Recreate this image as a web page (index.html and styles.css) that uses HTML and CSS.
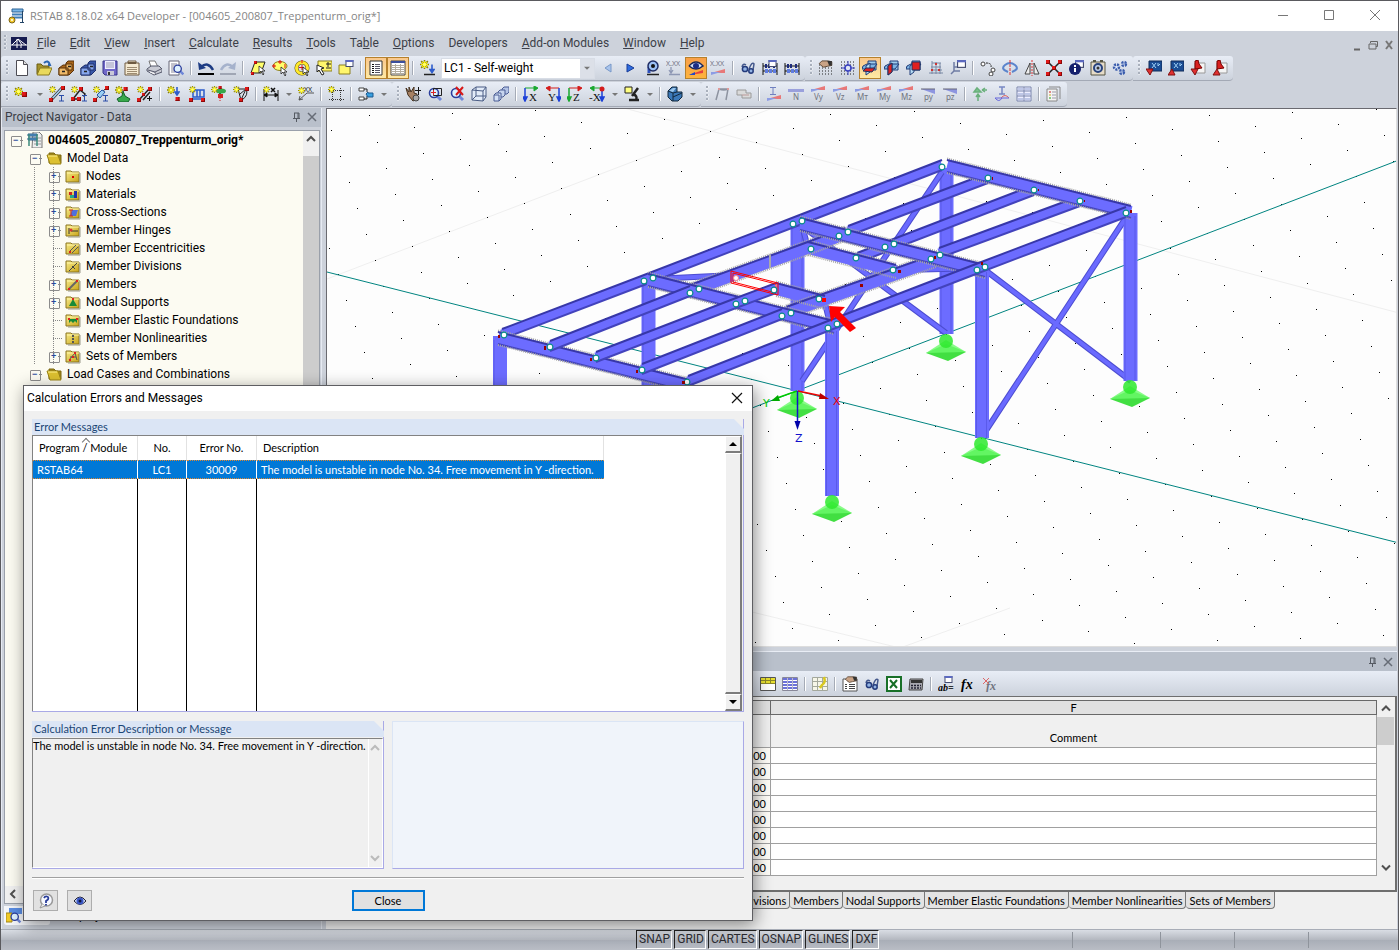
FILE: index.html
```html
<!DOCTYPE html>
<html lang="en">
<head>
<meta charset="utf-8">
<title>RSTAB 8.18.02 x64 Developer</title>
<link rel="stylesheet" href="styles.css">
</head>
<body>
<svg class="defs" aria-hidden="true">
  <defs>
    <linearGradient id="gold" x2="1" y2="1"><stop offset="0" stop-color="#f8ec8c"/><stop offset="1" stop-color="#c8a418"/></linearGradient>
    <symbol id="star" viewBox="0 0 8 8"><path d="M4 0v8M0 4h8M1 1l6 6M7 1L1 7" stroke="#8c8400" stroke-width="1.4"/><path d="M4 1v6M1 4h6M2 2l4 4M6 2L2 6" stroke="#fff200"/><circle cx="4" cy="4" r="1.5" fill="#ffff70"/></symbol>
    <symbol id="red" viewBox="0 0 4 4"><rect width="4" height="4" fill="#e01818"/><path d="M0 3.5h4M3.5 0v4" stroke="#8c0808"/></symbol>
    <symbol id="folder" viewBox="0 0 16 16"><path d="M1 3h5l1 1h7v10H1z" fill="url(#gold)" stroke="#8a7420"/><path d="M2 5h12" stroke="#fff6a8"/><path d="M15 5v10H3" fill="none" stroke="#9a9a8a"/></symbol>
    <symbol id="openfolder" viewBox="0 0 16 16"><path d="M3 13V3h5l2 2h5v8z" fill="#a18a1c" stroke="#7c6810"/><path d="M1 5h11l3 9H4z" fill="#dcc030" stroke="#9a8316"/><path d="M2 6h9" stroke="#fff08a"/></symbol>
    <symbol id="lens" viewBox="0 0 16 16"><path d="M10 10l4 4" stroke="#7088d8" stroke-width="3"/><circle cx="7" cy="7" r="4.5" fill="#dff2ff" stroke="#2b3d9c" stroke-width="1.6"/></symbol>
    <symbol id="glasses" viewBox="0 0 16 16"><path d="M2 7q1-4 4-2M9 9q3-8 5-5l-1 6" fill="none" stroke="#44588c" stroke-width="1.5"/><circle cx="5" cy="9" r="2.600" fill="#93b4e5" stroke="#233a7b" stroke-width="1.5"/><circle cx="11" cy="11" r="2.2" fill="#93b4e5" stroke="#233a7b" stroke-width="1.5"/></symbol>
    <symbol id="abacus" viewBox="0 0 16 16"><path d="M1 3v12M15 3v12M1 6h14M1 11h14" stroke="#111" fill="none"/><path d="M3 6h2M6 6h2M11 6h2" stroke="#1d2c7c" stroke-width="4"/><path d="M3 11h3M7 11h3M11 11h3" stroke="#5f7ce0" stroke-width="4"/></symbol>
    <symbol id="dots" viewBox="0 0 16 16"><path d="M1 2h14M1 5h14M1 8h14M1 11h14M1 14h14" stroke="#222" stroke-dasharray="1 2"/></symbol>
    <symbol id="hand" viewBox="0 0 16 10"><path d="M1 4l3-3 7 0 4 1v4l-5 1-4 1-3-2z" fill="#c9a386" stroke="#55402e"/><path d="M10 1l5 0v5h-3z" fill="#333"/></symbol>
    <symbol id="cube3" viewBox="0 0 16 16"><path d="M6 1h8v9H6z" fill="#9fccec" stroke="#203c78"/><path d="M1 6l4-2h10l-4 5H0z" fill="#7db4e4" stroke="#203c78"/><path d="M4 6l4-3v9l-4 3z" fill="#b5dcf4" stroke="#203c78"/></symbol>
    <symbol id="win" viewBox="0 0 8 7"><rect x=".5" y=".5" width="7" height="6" fill="#fff" stroke="#444c70"/><path d="M0 1h8" stroke="#5b69c0" stroke-width="2"/></symbol>
    <symbol id="cursor" viewBox="0 0 8 10"><path d="M1 1v7l2-2 2 4 1-1-2-3h3z" fill="#fff" stroke="#222" stroke-width=".8"/></symbol>
    <symbol id="dn" viewBox="0 0 6 9"><path d="M3 0v6M1 5l2 3 2-3z" stroke="#2d5ccc" stroke-width="1.6" fill="#2d5ccc"/></symbol>
    <symbol id="wedge" viewBox="0 0 16 6"><path d="M1 4L15 0v4z" fill="#e87878"/><path d="M1 3h10L1 6z" fill="#8c9ce4"/></symbol>
    <symbol id="wedge2" viewBox="0 0 16 6"><path d="M1 1h14v5z" fill="#8d95e0"/><path d="M1 1h14" stroke="#667"/></symbol>
    <symbol id="support" viewBox="-22 -8 44 30"><path d="M-20 12L0 3L20 11L2 20z" fill="#42df42"/><path d="M-20 12L0 -1L20 11z" fill="#6bfa6b" opacity=".8"/><circle r="7" fill="#2de92d" opacity=".85"/></symbol>
    <symbol id="nd" viewBox="-4 -4 8 8"><circle r="2.9" fill="#fff" stroke="#078a8a" stroke-width="1.2"/></symbol>
    <path id="raf-back" d="M502 334L644 280L797 221L942 165M848 231L988 178M857 258L1034 190M939 253L1080 201"/>
    <path id="raf-front" d="M550 346L690 291M596 357L736 303L776 288M642 369L782 314M688 381L828 326L976 269L1126 212"/>
    <path id="deep" d="M690 291L805 249L845 234M786 313L936 260M776 289L825 302M808 248L896 271"/>
    <path id="cross" d="M498 338L690 386M648 280L834 327M800 224L985 271M947 166L1131 212"/>
    <path id="brace" d="M802 381L942 172M802 226L946 333M985 432L1127 216M985 270L1131 381M653 279L735 275M900 270L985 268M801 222L807 244M824 299L831 328"/>
  </defs>
</svg>
<div class="app">
  <header class="titlebar">
    <svg class="ic" viewBox="0 0 16 16"><path d="M4 1h11v3H4z" fill="#79b7e8" stroke="#2d6294"/><path d="M4 6.500h11M4 9.500h11" stroke="#3f7fb8" stroke-width="2"/><path d="M14.500 3v12M12 14.500h4" stroke="#246"/><circle cx="4" cy="12" r="3" fill="#f0c62c" stroke="#7d6414"/><circle cx="4" cy="12" r="1" fill="#fff"/></svg>
    <h1>RSTAB 8.18.02 x64 Developer - [004605_200807_Treppenturm_orig*]</h1>
    <div class="winbtns">
      <button aria-label="Minimize"><svg class="ic" viewBox="0 0 16 16"><path d="M3 7.500h10" stroke="#777"/></svg></button>
      <button aria-label="Maximize"><svg class="ic" viewBox="0 0 16 16"><path d="M3.500 2.500h9v9h-9z" fill="none" stroke="#777"/></svg></button>
      <button aria-label="Close window"><svg class="ic" viewBox="0 0 16 16"><path d="M3 2l10 10M13 2L3 12" stroke="#777"/></svg></button>
    </div>
  </header>
  <nav class="menubar">
    <span class="grip"></span>
    <svg class="logo" viewBox="0 0 16 13"><path d="M0 0h16v13H0z" fill="#161b50"/><path d="M0 8h16M6 2v9M7 2l8 6M7 2L1 8M7 2l4 6M10 8v3" stroke="#fff"/></svg>
    <button><u>F</u>ile</button><button><u>E</u>dit</button><button><u>V</u>iew</button><button><u>I</u>nsert</button><button><u>C</u>alculate</button><button><u>R</u>esults</button><button><u>T</u>ools</button><button>Ta<u>b</u>le</button><button><u>O</u>ptions</button><button>Developers</button><button><u>A</u>dd-on Modules</button><button><u>W</u>indow</button><button><u>H</u>elp</button>
    <svg class="mdi" viewBox="0 0 44 12"><path d="M3 9.500h6" stroke="#666" stroke-width="2"/><path d="M19.500 3V1.500h7v5H25" fill="none" stroke="#666"/><path d="M18 4h7v5h-7z" fill="none" stroke="#666"/><path d="M35 1l6 8M41 1l-6 8" stroke="#777" stroke-width="2"/></svg>
  </nav>

  <div class="toolbar">
    <div class="group">
      <span class="grip"></span>
      <button aria-label="New"><svg class="ic" viewBox="0 0 16 16"><path d="M2.500.5h7l4 4v11h-11z" fill="#fff" stroke="#4c4c54"/><path d="M9.500.5v4h4" fill="#ddd" stroke="#4c4c54"/></svg></button>
      <button aria-label="Open"><svg class="ic" viewBox="0 0 16 16"><path d="M1 14V4h4l2 2h6v8z" fill="#a4922c" stroke="#6b5c10"/><path d="M4 8h12l-3 7H1z" fill="#e9d95c" stroke="#8a7a1e"/><path d="M8 3q4-4 6 2l-2 0" fill="none" stroke="#2c66b0" stroke-width="2"/></svg></button>
      <button aria-label="Project manager"><svg class="ic" viewBox="0 0 16 16"><path d="M1 8l4-3h3V3l2-2h6v9l-5 5H1z" fill="#a8661c" stroke="#5a3208"/><path d="M8 4h6v6H8zM1 8h9v7H1z" fill="#efb968" stroke="#5a3208"/><path d="M4 11.500h3M10 6.500h3" stroke="#222" stroke-width="1.500"/></svg></button>
      <button aria-label="Block manager"><svg class="ic" viewBox="0 0 16 16"><path d="M1 8l4-3h3V3l2-2h6v9l-5 5H1z" fill="#3857a8" stroke="#1d2e6c"/><path d="M8 4h6v6H8zM1 8h9v7H1z" fill="#86a6ec" stroke="#1d2e6c"/><path d="M4 11.500h3M10 6.500h3" stroke="#222" stroke-width="1.500"/></svg></button>
      <button aria-label="Save"><svg class="ic" viewBox="0 0 16 16"><path d="M1 1h14v14H3l-2-2z" fill="#7068c8" stroke="#38348a"/><path d="M3 1h10v8H3z" fill="#eef"/><path d="M4 3h8M4 5h8M4 7h8" stroke="#9a9ab4"/><path d="M5 11h7v4H5z" fill="#c8c8d8"/><path d="M6 12h2v3H6z" fill="#333"/></svg></button>
      <button aria-label="Notes"><svg class="ic" viewBox="0 0 16 16"><path d="M1 3h3V1h8v2h3v12H1z" fill="#f5ead2" stroke="#6e5a40"/><path d="M4 3h8" stroke="#6e5a40" stroke-width="2"/><path d="M3 7.500h10M3 9.500h10M3 11.500h10M3 13.500h10" stroke="#9d8b70"/></svg></button>
      <button aria-label="Print"><svg class="ic" viewBox="0 0 16 16"><path d="M3 1h6l3 6H5z" fill="#fff" stroke="#777"/><path d="M1 9l4-3 8 0 3 3v3l-8 3-7-4z" fill="#c9cbd4" stroke="#55586a"/><path d="M2 10l7 2 6-3M9 12v3" fill="none" stroke="#55586a"/><path d="M4 12l5 2" stroke="#fff"/></svg></button>
      <button aria-label="Print preview"><svg class="ic" viewBox="0 0 16 16"><path d="M1 1h10v14H1z" fill="#fff" stroke="#667"/><path d="M3 4h6M3 6h6M3 8h3M3 10h3M3 12h4" stroke="#889"/><use href="#lens" x="4" y="3" width="13" height="13"/></svg></button>
      <span class="sep"></span>
      <button aria-label="Undo"><svg class="ic" viewBox="0 0 16 16"><path d="M3 7q7-6 12 3" fill="none" stroke="#1d3c84" stroke-width="2.500"/><path d="M0 2l1 8 7-2z" fill="#1d3c84"/><path d="M0 14h16" stroke="#000" stroke-width="2"/></svg></button>
      <button aria-label="Redo"><svg class="ic" viewBox="0 0 16 16"><path d="M13 7Q6 1 1 10" fill="none" stroke="#a5b2cc" stroke-width="2.500"/><path d="M16 2l-1 8-7-2z" fill="#a5b2cc"/><path d="M0 14h16" stroke="#a0a6b4" stroke-width="2"/></svg></button>
      <span class="sep"></span>
      <button aria-label="Select parallelogram"><svg class="ic" viewBox="0 0 16 16"><path d="M5 2h10l-4 11H1z" fill="#ffff6c" stroke="#222"/><use href="#red" x="4" y="1" width="3" height="3"/><use href="#red" x="1" y="12" width="3" height="3"/><use href="#cursor" x="8" y="5" width="8" height="10"/></svg></button>
      <button aria-label="Select ellipse"><svg class="ic" viewBox="0 0 16 16"><ellipse cx="8" cy="6" rx="7" ry="4.500" fill="#ffff6c" stroke="#8c8020"/><path d="M8 0v4M6 2h4M0 6h4M2 4v4M13 4v4" stroke="#e01010"/><use href="#cursor" x="8" y="6" width="8" height="10"/></svg></button>
      <button aria-label="Select ring"><svg class="ic" viewBox="0 0 16 16"><circle cx="8" cy="8" r="5.500" fill="none" stroke="#5a5210" stroke-width="4"/><circle cx="8" cy="8" r="5.500" fill="none" stroke="#ffe92c" stroke-width="3"/><path d="M8 5v5M5 7.500h5M8 0v3" stroke="#e01010"/><use href="#cursor" x="8" y="6" width="8" height="10"/></svg></button>
      <button aria-label="Select plus minus"><svg class="ic" viewBox="0 0 16 16"><path d="M2 1h14v10H2z" fill="#fff66c" stroke="#8c8020"/><path d="M12 2v5M10 4h5M10 8h5" stroke="#222"/><path d="M1 5l7 3-3 1 3 5-2 1-3-5-2 2z" fill="#fff" stroke="#222"/></svg></button>
      <button aria-label="Select special"><svg class="ic" viewBox="0 0 16 16"><path d="M1 5h11v9H1z" fill="#fff66c" stroke="#8c8020"/><use href="#win" x="7" y="0" width="9" height="7"/></svg></button>
      <span class="sep"></span>
      <button class="on" aria-label="Navigator"><svg class="ic" viewBox="0 0 16 16"><path d="M2 1h12v14H2z" fill="#fff" stroke="#333"/><path d="M4 4.500h2M4 6.500h2M4 8.500h2M4 10.500h2M4 12.500h2" stroke="#111"/><path d="M7 4.500h5M7 6.500h5M7 8.500h5M7 10.500h5M7 12.500h5" stroke="#556"/></svg></button>
      <button class="on" aria-label="Tables"><svg class="ic" viewBox="0 0 16 16"><path d="M1 1h14v14H1z" fill="#fff" stroke="#444"/><path d="M1 2h14" stroke="#3b4f9c" stroke-width="2"/><path d="M1 5.500h14M1 7.500h14M1 9.500h14M1 11.500h14M1 13.500h14M5.500 4v11M10.500 4v11" stroke="#b4aea0"/></svg></button>
      <span class="sep"></span>
      <button aria-label="New load case"><svg class="ic" viewBox="0 0 16 16"><use href="#star" x="0" y="0" width="9" height="9"/><use href="#dn" x="9" y="4" width="6" height="10"/><path d="M4 14.500h11" stroke="#222" stroke-width="1.500"/></svg></button>
      <select class="combo" aria-label="Load case"><option>LC1 - Self-weight</option></select>
      <button aria-label="Previous load case"><svg class="ic" viewBox="0 0 16 16"><path d="M11 4L5 8l6 4z" fill="#a8c4ec" stroke="#7898c8"/></svg></button>
      <button aria-label="Next load case"><svg class="ic" viewBox="0 0 16 16"><path d="M5 4l7 4-7 4z" fill="#2d6cdf" stroke="#183c98"/></svg></button>
      <button aria-label="Show loads"><svg class="ic" viewBox="0 0 16 16"><path d="M5 13V7" stroke="#2d50bc" stroke-width="3"/><circle cx="9" cy="6" r="5" fill="#9cc0f4" stroke="#1e2c64" stroke-width="1.500"/><circle cx="9" cy="6" r="2" fill="#111"/><path d="M3 14.500h12" stroke="#222" stroke-width="1.500"/></svg></button>
      <button aria-label="Load values"><svg class="ic" viewBox="0 0 16 16"><text class="g gray" x="0" y="6">X.XX</text><path d="M5 7v6M3 10l2 3 2-3M3 14.500h11" stroke="#8e98b4" stroke-width="1.300" fill="none"/></svg></button>
      <button class="on strong" aria-label="Show results"><svg class="ic" viewBox="0 0 16 16"><path d="M1 6q7-8 14 0-7 6-14 0" fill="#cfe0fa" stroke="#1b2758" stroke-width="1.500"/><circle cx="8" cy="6" r="3" fill="#1b2c84"/><path d="M1 15l14-5v3z" fill="#e24040"/><path d="M1 15l6-3v3z" fill="#2448c4"/></svg></button>
      <button aria-label="Result values"><svg class="ic" viewBox="0 0 16 16"><text class="g gray" x="0" y="6">X.XX</text><use href="#wedge" x="0" y="9" width="16" height="6"/></svg></button>
      <span class="sep"></span>
      <button aria-label="Visibility"><svg class="ic"><use href="#glasses"/></svg></button>
      <button aria-label="Calculation parameters"><svg class="ic" viewBox="0 0 16 16"><use href="#abacus"/><use href="#win" x="6" y="0" width="9" height="7"/></svg></button>
      <button aria-label="Calculate"><svg class="ic"><use href="#abacus"/></svg></button>
    </div>
    <div class="group">
      <span class="grip"></span>
      <button aria-label="Grid settings"><svg class="ic" viewBox="0 0 16 16"><use href="#dots" y="3"/><use href="#hand" width="15" height="9"/></svg></button>
      <button aria-label="Snap"><svg class="ic" viewBox="0 0 16 16"><use href="#dots"/><path d="M8 1v14M1 8h14" stroke="#3840c0"/><circle cx="8" cy="8" r="3" fill="#dfe6f6" stroke="#3840c0" stroke-width="1.500"/></svg></button>
      <button class="on" aria-label="Plane XY"><svg class="ic" viewBox="0 0 16 16"><use href="#cube3"/><path d="M1 11l3-3h9l-3 4z" fill="#e02020" stroke="#203060"/></svg></button>
      <button aria-label="Plane YZ"><svg class="ic" viewBox="0 0 16 16"><use href="#cube3"/><path d="M4 6l4-3v9l-4 3z" fill="#e02020" stroke="#203060"/></svg></button>
      <button aria-label="Plane XZ"><svg class="ic" viewBox="0 0 16 16"><use href="#cube3"/><path d="M6 2h8v8H6z" fill="#e02020" stroke="#203060"/></svg></button>
      <button aria-label="Work plane"><svg class="ic" viewBox="0 0 16 16"><path d="M4 1v13M8 2v12M12 3v11M4 3h9M3 7h10M1 13h14M3 10h11" stroke="#7888a4" fill="none"/><path d="M7 3h2v2H7zM3 9h2v2H3zM10 9h2v2h-2z" fill="#c33"/></svg></button>
      <button aria-label="Coordinate system"><svg class="ic" viewBox="0 0 16 16"><path d="M4 2v9l-3 3M4 11l6 0M4 7h4" stroke="#6f7ca4" stroke-width="1.500" fill="none"/><use href="#win" x="7" y="0" width="9" height="8"/></svg></button>
      <span class="sep"></span>
      <button aria-label="Move"><svg class="ic" viewBox="0 0 16 16"><circle cx="3" cy="4" r="2" fill="#fff" stroke="#444"/><circle cx="13" cy="10" r="2" fill="#fff" stroke="#444"/><circle cx="11" cy="14" r="2" fill="#fff" stroke="#444"/><path d="M6 3q6 0 5 4" fill="none" stroke="#222" stroke-dasharray="2 1"/></svg></button>
      <button aria-label="Rotate"><svg class="ic" viewBox="0 0 16 16"><path d="M6 12q-8-3-3-7 5-4 10 0 5 4-3 7" fill="none" stroke="#5b84cc" stroke-width="2"/><path d="M8 0v16" stroke="#d33" stroke-dasharray="3 1"/></svg></button>
      <button aria-label="Mirror"><svg class="ic" viewBox="0 0 16 16"><path d="M6 3v11H1zM10 3v11h5z" fill="#eee" stroke="#444"/><path d="M8 0v16" stroke="#d33" stroke-dasharray="2 1"/></svg></button>
      <button aria-label="Connect"><svg class="ic" viewBox="0 0 16 16"><path d="M2 2l12 12M14 2L2 14" stroke="#222" stroke-width="1.500"/><use href="#red" width="4" height="4"/><use href="#red" x="12" width="4" height="4"/><use href="#red" y="12" width="4" height="4"/><use href="#red" x="12" y="12" width="4" height="4"/><use href="#red" x="6" y="6" width="4" height="4"/></svg></button>
      <button aria-label="Info"><svg class="ic" viewBox="0 0 16 16"><use href="#win" x="7" y="0" width="9" height="8"/><circle cx="7" cy="9" r="6" fill="#15206c"/><path d="M7 8v4M7 5v2" stroke="#fff" stroke-width="2"/></svg></button>
      <button aria-label="Settings"><svg class="ic" viewBox="0 0 16 16"><path d="M1 2h14v13H1z" fill="#e6dcc8" stroke="#554"/><path d="M3 1h3M10 1h3" stroke="#554" stroke-width="2"/><circle cx="8" cy="8" r="4" fill="#c0d0ea" stroke="#28427c" stroke-width="2"/><circle cx="8" cy="8" r="1.500" fill="#333"/></svg></button>
      <button aria-label="Modules"><svg class="ic" viewBox="0 0 16 16"><g fill="#dce6f8" stroke="#3a5cac" stroke-width="2.500" stroke-dasharray="2 1"><circle cx="4.500" cy="7" r="2.500"/><circle cx="12" cy="4" r="2"/><circle cx="10" cy="12" r="2"/></g></svg></button>
    </div>
    <div class="group">
      <span class="grip"></span>
      <button aria-label="Export X"><svg class="ic" viewBox="0 0 16 16"><path d="M3 1h13v10H3z" fill="#1b4d94" stroke="#122c58"/><path d="M6 3l4 5M10 3L6 8M12 3v3l2-2" stroke="#9fd0f6" fill="none"/><path d="M0 9h7l-3 6z" fill="#e03030" stroke="#801010"/></svg></button>
      <button aria-label="Import X"><svg class="ic" viewBox="0 0 16 16"><path d="M3 1h13v10H3z" fill="#1b4d94" stroke="#122c58"/><path d="M6 3l4 5M10 3L6 8M12 3v3l2-2" stroke="#9fd0f6" fill="none"/><path d="M0 15h7L4 9z" fill="#e03030" stroke="#801010"/></svg></button>
      <button aria-label="Export PDF"><svg class="ic" viewBox="0 0 16 16"><path d="M5 3h10v10H5z" fill="#f4f4f4" stroke="#999"/><path d="M5 1l3-1 1 4 3 4-7 1z" fill="#d82020" stroke="#700"/><path d="M1 9h7l-3 6z" fill="#e03030" stroke="#801010"/></svg></button>
      <button aria-label="Import PDF"><svg class="ic" viewBox="0 0 16 16"><path d="M5 3h10v10H5z" fill="#f4f4f4" stroke="#999"/><path d="M5 1l3-1 1 4 3 4-7 1z" fill="#d82020" stroke="#700"/><path d="M1 15h7L5 9z" fill="#e03030" stroke="#801010"/></svg></button>
    </div>
  </div>

  <div class="toolbar">
    <div class="group">
      <span class="grip"></span>
      <button aria-label="New node"><svg class="ic" viewBox="0 0 16 16"><use href="#star" y="1" width="9" height="9"/><use href="#red" x="8" y="6" width="5" height="5"/></svg></button><button class="drop" aria-label="Node options"></button>
      <button aria-label="New member"><svg class="ic" viewBox="0 0 16 16"><path d="M2 14L13 2" stroke="#333" stroke-width="3"/><path d="M2 14L13 2" stroke="#a9d4f4" stroke-width="1.500"/><use href="#star" width="7" height="7"/><use href="#red" x="12" y="0" width="4" height="4"/><use href="#red" x="0" y="12" width="4" height="4"/><path d="M10 9.500h5M12.500 9v6M10 15h5" stroke="#2a4ca8"/></svg></button>
      <button aria-label="New polyline"><svg class="ic" viewBox="0 0 16 16"><path d="M2 13l7-9 5 4-1 3M3 13h5" fill="none" stroke="#222" stroke-width="1.500"/><use href="#star" width="7" height="7"/><use href="#red" x="8" y="1" width="4" height="4"/><use href="#red" x="0" y="11" width="4" height="4"/><use href="#red" x="6" y="11" width="4" height="4"/><path d="M11 9.500h5M13.500 9v6M11 15h5" stroke="#2a4ca8"/></svg></button>
      <button aria-label="New member set"><svg class="ic" viewBox="0 0 16 16"><path d="M2 14L13 2" stroke="#333"/><path d="M4 9l5-5 3 2-5 6z" fill="#9bd0f4" stroke="#2456a4"/><use href="#star" width="7" height="7"/><use href="#red" x="12" y="0" width="4" height="4"/><use href="#red" x="0" y="12" width="4" height="4"/><path d="M10 9.500h5M12.500 9v6M10 15h5" stroke="#2a4ca8"/></svg></button>
      <button aria-label="New support"><svg class="ic" viewBox="0 0 16 16"><path d="M8 5l2 5 5 3-2 3H4l-2-3 5-3z" fill="#38a84c" stroke="#12602a"/><use href="#star" width="8" height="8"/><use href="#red" x="8" y="1" width="5" height="4"/></svg></button>
      <button aria-label="New hinge"><svg class="ic" viewBox="0 0 16 16"><path d="M2 14L12 3M6 14l7-8" stroke="#222" stroke-width="1.500"/><use href="#star" width="7" height="7"/><use href="#red" x="11" y="1" width="4" height="4"/><use href="#red" x="0" y="12" width="4" height="4"/><use href="#red" x="5" y="7" width="3" height="3"/><path d="M12.500 10v5M10 12.500h5" stroke="#111"/></svg></button>
      <span class="sep"></span>
      <button aria-label="Nodal load"><svg class="ic" viewBox="0 0 16 16"><use href="#star" width="8" height="8"/><use href="#dn" x="7" y="1" width="6" height="9"/><use href="#red" x="8" y="11" width="5" height="4"/></svg></button>
      <button aria-label="Member load"><svg class="ic" viewBox="0 0 16 16"><path d="M4 4h11v7H4zM8 4v7M11 4v7M2 13h13" fill="none" stroke="#2d5ccc" stroke-width="1.500"/><use href="#star" width="7" height="7"/><use href="#red" x="0" y="12" width="4" height="4"/><use href="#red" x="12" y="12" width="4" height="4"/></svg></button>
      <button aria-label="Imposed deformation"><svg class="ic" viewBox="0 0 16 16"><path d="M9 2v9" stroke="#12602a" stroke-width="2"/><ellipse cx="10" cy="5" rx="5" ry="2.500" fill="#38a84c"/><use href="#star" width="7" height="7"/><use href="#red" x="7" y="0" width="4" height="3"/><path d="M7 8h5v4H7z" fill="#d42020"/><path d="M9 12v4" stroke="#d42020" stroke-dasharray="1 1"/></svg></button>
      <button aria-label="Imperfection"><svg class="ic" viewBox="0 0 16 16"><path d="M5 3h8L8 14zM13 3q3 6-4 11M7 8l6-5" fill="none" stroke="#222"/><use href="#star" width="7" height="7"/><use href="#red" x="12" y="1" width="4" height="4"/><use href="#red" x="6" y="12" width="4" height="4"/></svg></button>
      <span class="sep"></span>
      <button aria-label="Dimension"><svg class="ic" viewBox="0 0 16 16"><path d="M1 4v11M15 4v11M1 9h14M1 9l3-2v4zM15 9l-3-2v4z" stroke="#111" fill="#111"/><path d="M8 2l4 4M12 2L8 6" stroke="#111" stroke-width="1.500"/><use href="#star" width="7" height="7"/></svg></button><button class="drop" aria-label="Dimension options"></button>
      <button aria-label="Comment"><svg class="ic" viewBox="0 0 16 16"><path d="M1 14L9 7h7M1 14l1-4M1 14l4-1" fill="none" stroke="#555"/><text class="g" x="6" y="6">XX</text><use href="#star" y="1" width="7" height="7"/></svg></button>
      <span class="sep"></span>
      <button aria-label="Grid line"><svg class="ic" viewBox="0 0 16 16"><path d="M4.500 2v14M12.500 2v14M1 4.500h15M1 13.500h15" stroke="#333" stroke-dasharray="1 1"/><use href="#star" width="7" height="7"/></svg></button>
      <span class="sep"></span>
      <button aria-label="Connect blocks"><svg class="ic" viewBox="0 0 16 16"><path d="M1 2h5v3H1zM1 11h5v3H1z" fill="#fff" stroke="#444"/><path d="M6 3h3v3M6 13h3v-3" stroke="#222" fill="none"/><path d="M8 8l2-2v1h5v4h-5z" fill="#38a0e0" stroke="#1b5890"/></svg></button><button class="drop" aria-label="Block options"></button>
    </div>
    <div class="group">
      <span class="grip"></span>
      <button aria-label="Pan"><svg class="ic" viewBox="0 0 16 16"><path d="M1 2l3 4 0-5 2 5 3-5 0 6 3 1v5l-4 2-5-6z" fill="#a78163" stroke="#44301e"/><path d="M13.500 1v8M10 4.500h6" stroke="#111"/><circle cx="11" cy="12" r="3" fill="#aaa" stroke="#444"/></svg></button>
      <button aria-label="Zoom window"><svg class="ic" viewBox="0 0 16 16"><use href="#lens"/><path d="M6.500 2.500h8v7h-8z" fill="none" stroke="#222"/><path d="M6.500 4v5M4 6.500h5" stroke="#d22"/></svg></button>
      <button aria-label="Zoom cancel"><svg class="ic" viewBox="0 0 16 16"><use href="#lens"/><path d="M7 1l7 8M14 1L7 9" stroke="#d81818" stroke-width="2"/></svg></button>
      <button aria-label="Isometric"><svg class="ic" viewBox="0 0 16 16"><path d="M1 4l4-3h10v10l-3 4-11-1zM1 4l11 1v10M12 5l3-4M5 1v9L1 14M5 10h10" fill="#e2ebf8" stroke="#4a5c84"/></svg></button>
      <button aria-label="Views"><svg class="ic" viewBox="0 0 16 16"><path d="M9 3l2-2h5v5l-2 2H9z" fill="#b4c4e6" stroke="#4a5c94"/><path d="M5 6l2-2h5v5l-2 2H5z" fill="#c6d4ee" stroke="#4a5c94"/><path d="M1 9l2-2h5v6l-2 2H1zM1 9h5v6" fill="#d5e2f6" stroke="#4a5c94"/></svg></button>
      <span class="sep"></span>
      <button aria-label="View X"><svg class="ic" viewBox="0 0 16 16"><path d="M2 2h12M11 0l4 2-4 3z" stroke="#1aa830" fill="#1aa830"/><path d="M2 2v12M0 11l2 4 2-4z" stroke="#1d40d8" fill="#1d40d8" stroke-width="1.500"/><text class="s" x="6" y="15">X</text></svg></button>
      <button aria-label="View Y"><svg class="ic" viewBox="0 0 16 16"><path d="M14 2H2M5 0L1 2l4 3z" stroke="#d41c1c" fill="#d41c1c"/><path d="M14 2v12M12 11l2 4 2-4z" stroke="#1d40d8" fill="#1d40d8" stroke-width="1.500"/><text class="s" x="3" y="15">Y</text></svg></button>
      <button aria-label="View Z"><svg class="ic" viewBox="0 0 16 16"><path d="M2 2h12M11 0l4 2-4 3z" stroke="#d41c1c" fill="#d41c1c"/><path d="M2 2v12M0 11l2 4 2-4z" stroke="#1aa830" fill="#1aa830" stroke-width="1.500"/><text class="s" x="6" y="15">Z</text></svg></button>
      <button aria-label="View -X"><svg class="ic" viewBox="0 0 16 16"><path d="M14 2H2M5 0L1 2l4 3z" stroke="#1aa830" fill="#1aa830"/><path d="M13 2v12M11 11l2 4 2-4z" stroke="#1d40d8" fill="#1d40d8" stroke-width="1.500"/><circle cx="13" cy="3" r="2.500" fill="#d41c1c"/><text class="s" x="0" y="15">-X</text></svg></button><button class="drop" aria-label="View options"></button>
      <button aria-label="Render"><svg class="ic" viewBox="0 0 16 16"><path d="M1 1h7v6H1z" fill="#ffff80" stroke="#222"/><path d="M14 2l-6 8M5 14h10M9 8q5 2 3 6" stroke="#222" stroke-width="2.500" fill="none"/></svg></button><button class="drop" aria-label="Render options"></button>
      <span class="sep"></span>
      <button aria-label="Solid display"><svg class="ic" viewBox="0 0 16 16"><path d="M1 5l4-4h5v5h5v5l-4 4H5l-4-4z" fill="#3b78b8" stroke="#12283c"/><path d="M2 5l4-3h3l-3 4z" fill="#9cc8ee"/><path d="M1 5l5 2v8M6 7l4-1M6 11l9-4" stroke="#12283c" fill="none"/></svg></button><button class="drop" aria-label="Display options"></button>
    </div>
    <div class="group">
      <span class="grip"></span>
      <button aria-label="Deformation"><svg class="ic" viewBox="0 0 16 16"><path d="M2 14L5 3h9l-2 11M5 3q5 2 9 0" fill="none" stroke="#8d93a0" stroke-width="1.500"/><path d="M4 2h2v2H4zM13 2h2v2h-2z" fill="#d99"/></svg></button>
      <button aria-label="Stress"><svg class="ic" viewBox="0 0 16 16"><path d="M1 4h9v3h5v5H6V9H1z" fill="#dadada" stroke="#9a9a9a"/><path d="M6 9h6M12 9h1" stroke="#b99"/></svg></button>
      <span class="sep"></span>
      <button aria-label="Internal forces"><svg class="ic" viewBox="0 0 16 16"><path d="M4 1.500h6M7 1v7M4 8.500h6" stroke="#7080c0"/><use href="#wedge" y="9" width="16" height="6"/></svg></button>
      <button aria-label="N"><svg class="ic" viewBox="0 0 16 16"><path d="M0 3h16v3H0z" fill="#9aa0dc"/><text class="g big gray" x="5" y="14">N</text></svg></button>
      <button aria-label="Vy"><svg class="ic" viewBox="0 0 16 16"><use href="#wedge" width="16" height="6"/><text class="g big gray" x="4" y="14">Vy</text></svg></button>
      <button aria-label="Vz"><svg class="ic" viewBox="0 0 16 16"><use href="#wedge" width="16" height="6"/><text class="g big gray" x="4" y="14">Vz</text></svg></button>
      <button aria-label="MT"><svg class="ic" viewBox="0 0 16 16"><use href="#wedge" width="16" height="6"/><text class="g big gray" x="3" y="14">Mт</text></svg></button>
      <button aria-label="My"><svg class="ic" viewBox="0 0 16 16"><use href="#wedge" width="16" height="6"/><text class="g big gray" x="3" y="14">My</text></svg></button>
      <button aria-label="Mz"><svg class="ic" viewBox="0 0 16 16"><use href="#wedge" width="16" height="6"/><text class="g big gray" x="3" y="14">Mz</text></svg></button>
      <button aria-label="py"><svg class="ic" viewBox="0 0 16 16"><use href="#wedge2" y="2" width="16" height="6"/><text class="g big gray" x="4" y="14">py</text></svg></button>
      <button aria-label="pz"><svg class="ic" viewBox="0 0 16 16"><use href="#wedge2" y="2" width="16" height="6"/><text class="g big gray" x="4" y="14">pz</text></svg></button>
      <span class="sep"></span>
      <button aria-label="Support reactions"><svg class="ic" viewBox="0 0 16 16"><path d="M2 6l3-4 4 4zM10 4h5M10 4l3-2M10 4l3 2M6 15V9M4 11l2-3 2 3" fill="#7cc490" stroke="#6ab07c" stroke-width="1.500"/></svg></button>
      <button aria-label="Section results"><svg class="ic" viewBox="0 0 16 16"><path d="M5 1h6M8 1v7M5 8h6" stroke="#7888c4" stroke-width="1.500"/><path d="M7 12q4-5 8 0" fill="none" stroke="#d66"/><path d="M1 12q4 5 7 0M1 12h14" fill="none" stroke="#66d"/></svg></button>
      <button aria-label="Result diagrams"><svg class="ic" viewBox="0 0 16 16"><path d="M1 1h14v14H1zM8 1v14M1 5h14M1 10h14" fill="#eef" stroke="#7a86ac"/><path d="M2 3h5M9 3h5M2 8h5M9 8h5M2 13h5M9 13h5" stroke="#8fa0d0"/></svg></button>
      <span class="sep"></span>
      <button aria-label="Report"><svg class="ic" viewBox="0 0 16 16"><path d="M3 1h11v12" fill="none" stroke="#888"/><path d="M1 3h10v12H1z" fill="#f4f4f4" stroke="#888"/><path d="M3 5h2v2H3z" fill="#d88"/><path d="M3 8h2v2H3z" fill="#dc8"/><path d="M3 11h2v2H3z" fill="#8c8"/><path d="M6 6h4M6 9h4M6 12h4" stroke="#99a"/></svg></button>
    </div>
  </div>

  <main class="work">
    <aside class="navigator">
      <div class="panelhead"><span>Project Navigator - Data</span>
        <button aria-label="Pin"><svg class="ic s12" viewBox="0 0 12 12"><path d="M4 1h5v5M3 6.500h7M4.500 1v5M6.500 7v3" stroke="#555a62" fill="none"/><path d="M8 1v5" stroke="#555a62"/></svg></button>
        <button aria-label="Close navigator"><svg class="ic s12" viewBox="0 0 12 12"><path d="M2 1l8 8M10 1l-8 8" stroke="#666c76" stroke-width="1.500"/></svg></button></div>
      <div class="treebox">
        <ul class="tree">
          <li class="l0"><i class="pm">−</i><svg class="ic" viewBox="0 0 16 16"><path d="M6 0h6l3 3v13H5z" fill="#eee" stroke="#777"/><path d="M7 6h7M7 9h7M7 12h7" stroke="#999"/><path d="M1 2h9v2H1zM1 6h9v2H1z" fill="#5b9dd4" stroke="#2a5c8c"/><path d="M2 2v12M10 2v12" stroke="#3d8a7c" stroke-width="1.500"/></svg><b>004605_200807_Treppenturm_orig*</b></li>
          <li class="l1"><i class="pm">−</i><svg class="ic"><use href="#openfolder"/></svg>Model Data</li>
          <li class="l2"><i class="pm">+</i><svg class="ic" viewBox="0 0 16 16"><use href="#folder"/><path d="M7 8h2v2H7z" fill="#d00"/></svg>Nodes</li>
          <li class="l2"><i class="pm">+</i><svg class="ic" viewBox="0 0 16 16"><use href="#folder"/><path d="M4 6h3v3H4z" fill="#c22"/><path d="M5 9h4v3H5z" fill="#2a8"/><path d="M9 5h3v7H9z" fill="#23a"/></svg>Materials</li>
          <li class="l2"><i class="pm">+</i><svg class="ic" viewBox="0 0 16 16"><use href="#folder"/><path d="M7 6h6l-2 6H5z" fill="#5070dc"/><path d="M4 6h4M6 6v6M4 12h4" stroke="#c22"/></svg>Cross-Sections</li>
          <li class="l2"><i class="pm">+</i><svg class="ic" viewBox="0 0 16 16"><use href="#folder"/><path d="M4 6v6M6 9h7" stroke="#333"/><circle cx="6" cy="8" r="1.500" fill="#d33"/></svg>Member Hinges</li>
          <li class="l2 leaf"><i></i><svg class="ic" viewBox="0 0 16 16"><use href="#folder"/><path d="M4 12l7-7M7 13l6-6" stroke="#555"/><path d="M4 11h2v2H4z" fill="#d22"/></svg>Member Eccentricities</li>
          <li class="l2 leaf"><i></i><svg class="ic" viewBox="0 0 16 16"><use href="#folder"/><path d="M4 13l8-8M7 8l3 3" stroke="#444"/></svg>Member Divisions</li>
          <li class="l2"><i class="pm">+</i><svg class="ic" viewBox="0 0 16 16"><use href="#folder"/><path d="M4 13l8-8" stroke="#666" stroke-width="2"/><path d="M3 12h2v2H3zM11 4h2v2h-2z" fill="#d22"/></svg>Members</li>
          <li class="l2"><i class="pm">+</i><svg class="ic" viewBox="0 0 16 16"><use href="#folder"/><path d="M8 5l4 7H4z" fill="#178a38"/><path d="M7 4h2v2H7z" fill="#d22"/></svg>Nodal Supports</li>
          <li class="l2 leaf"><i></i><svg class="ic" viewBox="0 0 16 16"><use href="#folder"/><path d="M4 7h8v4l-2-2-2 2-2-2-2 2z" fill="#178a38"/><path d="M3 6h2v2H3zM11 6h2v2h-2z" fill="#d22"/></svg>Member Elastic Foundations</li>
          <li class="l2 leaf"><i></i><svg class="ic" viewBox="0 0 16 16"><use href="#folder"/><path d="M8 5v8" stroke="#555" stroke-width="2" stroke-dasharray="2 1"/></svg>Member Nonlinearities</li>
          <li class="l2"><i class="pm">+</i><svg class="ic" viewBox="0 0 16 16"><use href="#folder"/><path d="M4 12l6-7 2 7M5 9h6" stroke="#555" fill="none"/><path d="M4 11h2v2H4zM9 4h2v2H9zM7 8h2v2H7z" fill="#d22"/></svg>Sets of Members</li>
          <li class="l1"><i class="pm">−</i><svg class="ic"><use href="#openfolder"/></svg>Load Cases and Combinations</li>
        </ul>
        <div class="vscroll"><svg class="ic" viewBox="0 0 16 16"><path d="M4 10l4-4 4 4" fill="none" stroke="#505050" stroke-width="2"/></svg><span class="thumb"></span></div>
        <div class="hscroll"><svg class="ic" viewBox="0 0 16 16"><path d="M10 4L6 8l4 4" fill="none" stroke="#505050" stroke-width="2"/></svg></div>
      </div>
      <div class="navtabs"><button aria-label="Data"><svg class="ic" viewBox="0 0 16 16"><path d="M3 0h13v6H3z" fill="#5a8de4"/><path d="M0 5h6v9H0z" fill="#f2cc28" stroke="#a08418"/><use href="#lens" x="3" y="3" width="13" height="13"/></svg></button><span>Display</span></div>
    </aside>

    <section class="right">
      <div class="viewport">
        <svg class="model" role="img" aria-label="3D model of the stair tower">
          <g transform="translate(-327 -109)">
            <path d="M327 279L770 109M620 107L1399 313M752 612L900 648L1010 608" stroke="#efefef" fill="none"/>
            <g id="griddots" fill="#000"></g>
            <path d="M327 272L1399 543M752 408L1399 160" stroke="#008480"/>
            <path class="col" d="M946.500 168V334M797.500 222V391M648.500 280V400M500 336V400"/>
            <path d="M941 172V334M792 226V391M643 284V400M494 340V400M951 172V334M802 226V391" stroke="#5a5aea"/>
            <use href="#brace" stroke="#4d4dd0" stroke-width="6"/>
            <use href="#brace" stroke="#6a6aff" stroke-width="4"/>
            <path class="col" d="M1130.500 213V381M982 268V438M832 327V496"/>
            <path d="M1125 216V381M976.500 272V438M826.500 331V496M1135 216V381M986.500 272V438M836.500 331V496" stroke="#5a5aea"/>
            <g fill="none">
              <use href="#raf-back" class="beam"/>
              <use href="#raf-back" class="edge" transform="translate(0 -5)"/>
              <use href="#raf-back" class="edge low" transform="translate(0 5)"/>
            </g>
            <g fill="none">
              <use href="#deep" class="beam wide"/>
              <use href="#deep" class="hash" transform="translate(0 -7)"/>
              <use href="#deep" class="edge" transform="translate(0 -6)"/>
              <use href="#deep" class="hash thin" transform="translate(0 7)"/>
            </g>
            <g fill="none">
              <use href="#cross" class="beam wide"/>
              <use href="#cross" class="hash" transform="translate(0 -7)"/>
              <use href="#cross" class="edge" transform="translate(0 -6)"/>
              <use href="#cross" class="edge low" transform="translate(0 6)"/>
              <use href="#cross" class="hash thin" transform="translate(0 7)"/>
            </g>
            <g fill="none">
              <use href="#raf-front" class="beam"/>
              <use href="#raf-front" class="edge" transform="translate(0 -5)"/>
              <use href="#raf-front" class="edge low" transform="translate(0 5)"/>
            </g>
            <path d="M770 255v13" stroke="#aaa" stroke-width="2"/>
            <path d="M731 271l47 12v12l-47-12zM733 273l43 11v9l-43-11z" fill="none" stroke="#f00"/>
            <g>
              <use href="#nd" x="500" y="331" width="8" height="8"/><use href="#nd" x="546" y="343" width="8" height="8"/><use href="#nd" x="592" y="354" width="8" height="8"/><use href="#nd" x="638" y="366" width="8" height="8"/><use href="#nd" x="683" y="378" width="8" height="8"/>
              <use href="#nd" x="640" y="277" width="8" height="8"/><use href="#nd" x="649" y="274" width="8" height="8"/><use href="#nd" x="686" y="289" width="8" height="8"/><use href="#nd" x="695" y="285" width="8" height="8"/><use href="#nd" x="732" y="300" width="8" height="8"/><use href="#nd" x="741" y="297" width="8" height="8"/><use href="#nd" x="778" y="312" width="8" height="8"/><use href="#nd" x="787" y="309" width="8" height="8"/><use href="#nd" x="824" y="324" width="8" height="8"/><use href="#nd" x="833" y="320" width="8" height="8"/>
              <use href="#nd" x="789" y="220" width="8" height="8"/><use href="#nd" x="798" y="217" width="8" height="8"/><use href="#nd" x="835" y="232" width="8" height="8"/><use href="#nd" x="844" y="228" width="8" height="8"/><use href="#nd" x="881" y="243" width="8" height="8"/><use href="#nd" x="890" y="240" width="8" height="8"/><use href="#nd" x="927" y="255" width="8" height="8"/><use href="#nd" x="936" y="251" width="8" height="8"/><use href="#nd" x="973" y="266" width="8" height="8"/><use href="#nd" x="981" y="263" width="8" height="8"/>
              <use href="#nd" x="938" y="163" width="8" height="8"/><use href="#nd" x="984" y="174" width="8" height="8"/><use href="#nd" x="1030" y="186" width="8" height="8"/><use href="#nd" x="1076" y="197" width="8" height="8"/><use href="#nd" x="1122" y="209" width="8" height="8"/>
              <use href="#nd" x="807" y="245" width="8" height="8"/><use href="#nd" x="852" y="254" width="8" height="8"/><use href="#nd" x="889" y="266" width="8" height="8"/><use href="#nd" x="815" y="295" width="8" height="8"/><use href="#nd" x="770" y="286" width="8" height="8"/>
            </g>
            <circle cx="736" cy="278" r="2.500" fill="#fff" stroke="#f88"/>
            <path d="M822 298h4v4h-4z" fill="#f00"/>
            <path d="M860 284h3v3h-3zM898 270h3v3h-3zM934 256h2v3h-2zM498 335h2v3h-2zM544 346h2v4h-2zM590 358h2v3h-2zM636 370h2v3h-2zM682 381h3v3h-3zM992 177h1v3h-1zM1038 189h1v2h-1zM1084 200h1v2h-1zM1130 210h2v3h-2zM981 262h2v3h-2z" fill="#900"/>
            <use href="#support" x="775" y="390" width="44" height="30"/><use href="#support" x="924" y="333" width="44" height="30"/><use href="#support" x="1108" y="379" width="44" height="30"/><use href="#support" x="959" y="436" width="44" height="30"/><use href="#support" x="810" y="494" width="44" height="30"/>
            <path d="M829 306l16 1-5 5 16 16-6 4-15-15-4 5z" fill="#f00"/>
            <path d="M798 391l24 5" stroke="#e00" stroke-width="1.500"/><path d="M829 399l-9-6-1 6z" fill="#b00"/>
            <path d="M797 391l-20 7" stroke="#0c0" stroke-width="1.500"/><path d="M771 401l7-6 2 6z" fill="#0a0"/>
            <path d="M797.500 391v32" stroke="#11c" stroke-width="1.500"/><path d="M797.500 430l-3-9h6z" fill="#00a"/>
            <text x="833" y="405" fill="#e00" class="axis">X</text><text x="763" y="407" fill="#0c0" class="axis">Y</text><text x="795" y="442" fill="#11c" class="axis">Z</text>
          </g>
        </svg>
      </div>
      <section class="tables">
        <div class="panelhead"><span></span>
          <button aria-label="Pin"><svg class="ic s12" viewBox="0 0 12 12"><path d="M4 2h5v5M3 7.500h7M4.500 2v5M6.500 8v3" stroke="#555a62" fill="none"/><path d="M8 2v5" stroke="#555a62"/></svg></button>
          <button aria-label="Close tables"><svg class="ic s12" viewBox="0 0 12 12"><path d="M2 2l8 8M10 2l-8 8" stroke="#666c76" stroke-width="1.500"/></svg></button></div>
        <div class="tabletools">
          <button aria-label="Header"><svg class="ic" viewBox="0 0 16 16"><path d="M.5 1.500h15v13H.5z" fill="#fff" stroke="#555"/><path d="M1 2h14v5H1z" fill="#e8e030"/><path d="M1 4.500h14M1 7.500h14M5.500 2v5M10.500 2v5" stroke="#8c8828"/></svg></button>
          <button aria-label="Rows"><svg class="ic" viewBox="0 0 16 16"><path d="M.5 1.500h15v13H.5z" fill="#fff" stroke="#889"/><path d="M1 3h14M1 6h14M1 9h14M1 12h14" stroke="#6c72d8" stroke-width="2"/><path d="M5.500 2v12M10.500 2v12" stroke="#bbc"/></svg></button>
          <span class="sep"></span>
          <button aria-label="Pick"><svg class="ic" viewBox="0 0 16 16"><path d="M.5 1.500h15v13H.5zM.5 5.500h15M.5 10.500h15M5.500 1v13M10.500 1v13" fill="#f6f6e8" stroke="#a4a89c"/><path d="M12 1q2 6-2 8l-2 3" fill="none" stroke="#d8c820" stroke-width="2.500"/></svg></button>
          <span class="sep"></span>
          <button aria-label="Edit"><svg class="ic" viewBox="0 0 16 16"><path d="M1 3h14v12H1z" fill="#fff" stroke="#555"/><path d="M3 8.500h2M7 8.500h6M3 10.500h2M7 10.500h6M3 12.500h2M7 12.500h6" stroke="#444"/><use href="#hand" x="2" width="14" height="8"/></svg></button>
          <button aria-label="View"><svg class="ic"><use href="#glasses"/></svg></button>
          <button aria-label="Excel"><svg class="ic" viewBox="0 0 16 16"><path d="M1 1h14v14H1z" fill="#fff" stroke="#187028" stroke-width="2"/><path d="M4 4l7 8M11 4l-7 8" stroke="#187028" stroke-width="2"/></svg></button>
          <button aria-label="Calculator"><svg class="ic" viewBox="0 0 16 16"><path d="M2 3h13l-1 11H1z" fill="#a8a8b0" stroke="#444"/><path d="M3 4h11v3H3z" fill="#333"/><path d="M3 9.500h10M3 12h10" stroke="#223" stroke-width="1.500" stroke-dasharray="2 1"/></svg></button>
          <span class="sep"></span>
          <button aria-label="Parameters"><svg class="ic" viewBox="0 0 16 16"><use href="#win" x="5" width="11" height="7"/><text class="fx sm" x="0" y="15">ab=</text></svg></button>
          <button aria-label="Formula"><svg class="ic" viewBox="0 0 16 16"><text class="fx" x="1" y="13">fx</text></svg></button>
          <button aria-label="Delete formula"><svg class="ic" viewBox="0 0 16 16"><text class="fx mid gray" x="4" y="14">fx</text><path d="M1 2l6 6M7 2L1 8" stroke="#d66"/></svg></button>
        </div>
        <div class="gridwrap">
          <div class="gridarea">
            <table class="grid">
              <colgroup><col class="c1"><col></colgroup>
              <thead><tr class="letters"><th></th><th>F</th></tr><tr class="names"><th></th><th>Comment</th></tr></thead>
              <tbody><tr><td>0.000</td><td></td></tr><tr><td>0.000</td><td></td></tr><tr><td>0.000</td><td></td></tr><tr><td>0.000</td><td></td></tr><tr><td>0.000</td><td></td></tr><tr><td>0.000</td><td></td></tr><tr><td>0.000</td><td></td></tr><tr><td>0.000</td><td></td></tr></tbody>
            </table>
            <div class="vscroll"><svg class="ic" viewBox="0 0 16 16"><path d="M4 10l4-4 4 4" fill="none" stroke="#505050" stroke-width="2"/></svg><span class="thumb short"></span><svg class="ic" viewBox="0 0 16 16"><path d="M4 6l4 4 4-4" fill="none" stroke="#505050" stroke-width="2"/></svg></div>
          </div>
        </div>
        <div class="sheets"><button>Member Divisions</button><button>Members</button><button>Nodal Supports</button><button>Member Elastic Foundations</button><button>Member Nonlinearities</button><button>Sets of Members</button></div>
      </section>
    </section>
  </main>

  <footer class="status"><div class="modes"><button>SNAP</button><button>GRID</button><button>CARTES</button><button>OSNAP</button><button>GLINES</button><button>DXF</button></div><div class="cells"><span></span><span></span><span></span><span></span></div></footer>

  <div class="dialog" role="dialog" aria-labelledby="dlg-title">
    <div class="dlghead"><h2 id="dlg-title">Calculation Errors and Messages</h2><button aria-label="Close dialog"><svg class="ic" viewBox="0 0 16 16"><path d="M3 3l10 10M13 3L3 13" stroke="#111" stroke-width="1.200"/></svg></button></div>
    <div class="dlgbody">
      <section class="box errors">
        <h3>Error Messages</h3>
        <div class="list">
          <div class="listscroll">
          <table class="errtable">
            <colgroup><col class="e1"><col class="e2"><col class="e3"><col class="e4"><col></colgroup>
            <thead><tr><th class="sorted left">Program / Module</th><th>No.</th><th>Error No.</th><th class="left">Description</th><th></th></tr></thead>
            <tbody><tr class="sel"><td>RSTAB64</td><td>LC1</td><td>30009</td><td>The model is unstable in node No. 34. Free movement in Y -direction.</td><td></td></tr>
            <tr class="fill"><td></td><td></td><td></td><td></td><td></td></tr></tbody>
          </table>
          </div>
          <div class="classic"><button aria-label="Scroll up"><svg viewBox="0 0 8 4"><path d="M0 4l4-4 4 4z"/></svg></button><span></span><button aria-label="Scroll down"><svg viewBox="0 0 8 4"><path d="M0 0l4 4 4-4z"/></svg></button></div>
        </div>
      </section>
      <div class="lower">
        <section class="box desc">
          <h3><label for="msg">Calculation Error Description or Message</label></h3>
          <div class="msgwrap"><textarea id="msg" readonly wrap="off">The model is unstable in node No. 34. Free movement in Y -direction.</textarea>
          <div class="vbar"><svg class="ic s12" viewBox="0 0 12 12"><path d="M2 8l4-4 4 4" fill="none" stroke="#bbb" stroke-width="2"/></svg><svg class="ic s12" viewBox="0 0 12 12"><path d="M2 4l4 4 4-4" fill="none" stroke="#bbb" stroke-width="2"/></svg></div></div>
        </section>
        <section class="preview"></section>
      </div>
      <div class="actions">
        <div class="small"><button aria-label="Help"><svg class="ic" viewBox="0 0 16 16"><circle cx="8.500" cy="7" r="6" fill="#f6f8ff" stroke="#999" stroke-width="1.500"/><path d="M4 11l-2 4 5-2" fill="#eee" stroke="#999"/><path d="M6 5q1-2 3-1.500t1 3L8 8v2M8 11v1.500" fill="none" stroke="#283c98" stroke-width="1.800"/></svg></button><button aria-label="Show in model"><svg class="ic" viewBox="0 0 16 16"><path d="M2 8q6-8 12 0-6 7-12 0" fill="#c9d8f4" stroke="#223"/><circle cx="8" cy="8" r="3.500" fill="#3b58c8"/><circle cx="8" cy="8" r="1.500" fill="#101840"/></svg></button></div>
        <button class="closebtn">Close</button>
      </div>
    </div>
  </div>
</div>
<script src="grid.js"></script>
</body>
</html>
```

FILE: grid.js
```js
// Snap-grid points of the work plane, spread from the model origin.
const origin = { x: 797.5, y: 391.5 };
const alongX = { x: 45.95, y: 11.67 };
const alongY = { x: 37.25, y: -14.35 };
let points = '';
for (let i = -30; i <= 30; i++) {
  for (let j = -30; j <= 30; j++) {
    const x = Math.floor(origin.x + i * alongX.x + j * alongY.x);
    const y = Math.floor(origin.y + i * alongX.y + j * alongY.y);
    if (x > 326 && x < 1400 && y > 108 && y < 660) points += `M${x} ${y}h1v1h-1z`;
  }
}
const path = document.createElementNS('http://www.w3.org/2000/svg', 'path');
path.setAttribute('d', points);
document.getElementById('griddots').append(path);
```

FILE: styles.css
```css
* { box-sizing: border-box; }
body { margin: 0; font: 12px/18px Roboto, "Open Sans", sans-serif; color: #000; background: #cdd2db; }
button { font: inherit; color: inherit; background: none; border: 0; padding: 0; margin: 0; }
h1, h2, h3, ul { margin: 0; padding: 0; font-size: 12px; font-weight: 400; }
.defs { position: absolute; width: 0; height: 0; }
.ic { width: 16px; height: 16px; display: block; flex: none; }
.s12 { width: 12px; height: 12px; }
.app { position: relative; display: flex; flex-direction: column; height: 100vh; min-height: 940px; border: 1px solid #5a5a5e; border-bottom: 0; overflow: hidden; }

.titlebar { display: flex; align-items: center; height: 30px; background: #fff; padding-left: 7px; gap: 6px; flex: none; }
.titlebar h1 { color: #858585; flex: 1; font: 11px/18px "Open Sans", sans-serif; }
.winbtns { display: flex; }
.winbtns button { width: 46px; height: 30px; display: grid; place-items: center; }

.menubar { display: flex; align-items: center; height: 25px; background: #cdd2db; flex: none; color: #3c3f48; padding-bottom: 1px; }
.menubar button { margin-right: 14px; }
.menubar .logo { width: 16px; height: 13px; margin-right: 10px; }
.menubar .grip { margin: 0 3px; }
.mdi { width: 44px; height: 12px; margin: 6px 3px 0 auto; }
.grip { flex: none; width: 4px; height: 16px; background: radial-gradient(circle at 1px 1px, #a9b0bc 1px, #fff 1px, transparent 2px) 0 0 / 4px 4px; }

.toolbar { display: flex; height: 26px; flex: none; }
.group { display: flex; align-items: center; height: 25px; background: linear-gradient(#e8edf6, #ccd2dc); border-bottom: 1px solid #a3a9b5; border-radius: 3px 3px 4px 0; padding-right: 2px; }
.group .grip { margin-left: 5px; margin-right: 1px; }
.group button { width: 22px; height: 22px; display: grid; place-items: center; }
.group .on { border: 1px solid #b6812c; background: linear-gradient(#fbc88c, #fee9a4); }
.group .strong { background: linear-gradient(#f9a04a, #fdb33c); }
.group .drop { width: 13px; }
.drop::before { content: ""; border: 3px solid transparent; border-top-color: #777; border-bottom: 0; }
.sep { width: 8px; height: 14px; background: linear-gradient(90deg, transparent 3px, #a5abb6 3px 4px, #fff 4px 5px, transparent 5px); }
.combo { width: 154px; height: 21px; margin: 0 2px; border: 1px solid #d8dde6; border-radius: 0; appearance: none; font: 12px Roboto, sans-serif; padding: 0 2px; color: #000; background: url("data:image/svg+xml,%3Csvg xmlns='http://www.w3.org/2000/svg' width='14' height='20'%3E%3Cpath fill='%23dce0e8' d='M0 0h14v20H0z'/%3E%3Cpath d='M4 8h6l-3 3z' fill='%23777'/%3E%3C/svg%3E") right center no-repeat #fff; }
.g { font: 7px "Noto Sans", sans-serif; fill: #222; }
.g.big { font-size: 8px; }
.s { font: 11px "Liberation Serif", serif; fill: #111; }
.g.gray, .gray { fill: #70747f; }
.fx { font: italic bold 14px "Liberation Serif", serif; }
.fx.mid { font-size: 12px; }
.fx.sm { font-size: 10px; }

.work { flex: 1; display: flex; min-height: 0; background: #cdd2db; }
.navigator { width: 321px; margin-right: 4px; display: flex; flex-direction: column; flex: none; border: 1px solid #e6eaf2; border-width: 0 1px; }
.panelhead { display: flex; align-items: center; height: 19px; background: #b9c0cb; padding: 0 3px; gap: 4px; flex: none; color: #3b3e46; }
.panelhead span { flex: 1; line-height: 18px; padding-bottom: 1px; }
.treebox { flex: 1; min-height: 0; margin: 3px 1px 2px 2px; background: #fcfbf2; border: 1px solid #9aa0aa; display: grid; grid-template: minmax(0, 1fr) 17px / minmax(0, 1fr) 16px; overflow: hidden; }
.tree { list-style: none; overflow: hidden; }
.tree li { display: flex; align-items: center; height: 18px; gap: 5px; white-space: nowrap; }
.tree .l0 { padding-left: 6px; }
.tree .l1 { padding-left: 25px; }
.tree .l2 { padding-left: 44px; background: repeating-linear-gradient(#888 0 1px, transparent 1px 2px) 48px 0 / 1px 100% no-repeat, repeating-linear-gradient(#888 0 1px, transparent 1px 2px) 29px 0 / 1px 100% no-repeat; }
.tree i { width: 13px; height: 9px; flex: none; font-style: normal; background: repeating-linear-gradient(90deg, #888 0 1px, transparent 1px 2px) 9px 4px / 100% 1px no-repeat; margin-right: -2px; }
.tree .leaf i { background-position: 4px 4px; }
.tree .pm { position: relative; font: bold 9px/8px "Liberation Sans", sans-serif; color: #2a4a9c; padding-left: 2px; }
.tree .pm::before { content: ""; position: absolute; left: 0; top: 0; width: 9px; height: 9px; border: 1px solid #8c8c8c; border-radius: 1px; }
.vscroll { background: #f0f0f0; display: flex; flex-direction: column; align-items: center; }
.vscroll .thumb { flex: 1; align-self: stretch; margin-top: 9px; background: #cdcdcd; }
.vscroll .short { flex: none; height: 28px; margin: 0 0 auto; }
.hscroll { background: #f0f0f0; grid-column: 1 / -1; }
.navtabs { height: 23px; display: flex; align-items: flex-start; gap: 12px; padding-left: 2px; flex: none; }
.navtabs button { background: #f4f6fa; width: 46px; height: 19px; padding-left: 2px; border-radius: 0 0 3px 3px; }

.right { flex: 1; min-width: 0; display: flex; flex-direction: column; padding-right: 1px; }
.viewport { flex: 1; min-height: 0; background: #fdfdfd; border: 1px solid #6a6a70; border-right-color: #ddd; border-bottom-color: #ddd; }
.model { width: 100%; height: 100%; display: block; overflow: hidden; }
.col { stroke: #6c6cff; stroke-width: 14; }
.beam { stroke: #6c6cff; stroke-width: 9; }
.beam.wide { stroke-width: 12; }
.edge { stroke: #3737a8; stroke-width: 2; }
.edge.low { stroke: #4343bc; }
.hash { stroke: #a6a6a6; stroke-width: 3; stroke-dasharray: 1 1; }
.hash.thin { stroke-width: 2; }
.axis { font: 11px "DejaVu Sans", sans-serif; }
.tables { flex: none; margin-top: 4px; border-top: 1px solid #e9edf5; background: #f0f0f0; }
.tabletools { display: flex; align-items: center; height: 25px; padding-left: 431px; background: linear-gradient(#e8edf6, #ccd2dc); }
.tabletools button { width: 22px; height: 22px; display: grid; place-items: center; flex: none; }
.gridwrap { border: 1px solid #6e6e6e; border-width: 1px 2px 2px 1px; padding: 3px 0 14px 0; font: 11px/14px Lato, sans-serif; }
.gridarea { display: flex; }
.grid { flex: 1; border-collapse: separate; border-spacing: 0; table-layout: fixed; }
.grid .c1 { width: 444px; }
.grid th, .grid td { padding: 0 4px; font-weight: 400; border-right: 1px solid #a0a0a0; border-bottom: 1px solid #a0a0a0; }
.grid .letters th { background: #e1e1e1; height: 15px; border-top: 1px solid #696969; border-bottom: 1px solid #696969; border-right: 1px solid #696969; line-height: 13px; }
.grid .names th { height: 33px; vertical-align: bottom; padding-bottom: 2px; }
.grid td { background: #fff; height: 16px; text-align: right; }
.grid td:first-child { background: #fffdf8; }
.gridarea .vscroll { width: 18px; padding-right: 1px; }
.gridarea .vscroll .ic { height: 17px; }
.sheets { display: flex; height: 37px; align-items: flex-start; padding-left: 370px; font: 11px/17px Lato, sans-serif; }
.sheets button { height: 17px; background: #e3e3e3; border: 1px solid #777; border-width: 0 1px 1px 0; padding: 0 3px; border-radius: 0 0 4px 4px; white-space: nowrap; flex: none; }

.status { display: flex; height: 21px; flex: none; border-top: 1px solid #a8adb7; background: linear-gradient(#d9dde4, #b3b7bf 50%, #a9aeb7 51%, #b9bdc5); }
.modes { display: flex; gap: 2px; padding-left: 635px; color: #2b2b30; }
.modes button { height: 19px; border: 1px solid #222; border-right-color: #fff; border-bottom-color: #fff; padding: 0 1px 0 2px; line-height: 15px; }
.cells { margin-left: auto; display: flex; padding: 2px 16px 2px 0; }
.cells span { width: 74px; border-left: 1px solid #8f949c; }
.cells span:first-child { width: 88px; }

.dialog { position: absolute; left: 22px; top: 384px; width: 730px; height: 536px; border: 1px solid #5e5e62; background: #f0f0f0; box-shadow: 2px 4px 16px rgba(0, 0, 0, .45); display: flex; flex-direction: column; }
.dlghead { display: flex; align-items: center; justify-content: space-between; height: 25px; background: #fff; padding: 0 7px 1px 3px; flex: none; }
.dlgbody { flex: 1; display: flex; flex-direction: column; padding: 8px; min-height: 0; font: 11px/14px Lato, sans-serif; }
.box { display: flex; flex-direction: column; border-right: 1px solid #a9a9e6; border-bottom: 1px solid #a9a9e6; }
.box h3 { height: 16px; font: 11px/16px Lato, sans-serif; color: #1a4675; background: #dbe5f5; padding-left: 2px; margin-right: -1px; clip-path: polygon(0 0, calc(100% - 10px) 0, 100% 10px, 100% 100%, 0 100%); }
.errors { height: 293px; }
.list { flex: 1; display: flex; background: #fff; border: 1px solid #828282; border-right: 0; border-bottom: 0; min-height: 0; margin-right: 1px; }
.listscroll { flex: 1; min-width: 0; }
.errtable { width: 100%; height: 100%; table-layout: fixed; border-collapse: separate; border-spacing: 0; }
.e1 { width: 105px; } .e2 { width: 49px; } .e3 { width: 70px; } .e4 { width: 347px; }
.errtable th { font-weight: 400; height: 24px; border-right: 1px solid #e2e2e2; padding: 0 6px; }
.errtable th:last-child { border: 0; }
.errtable .left { text-align: left; }
.sorted { position: relative; }
.sorted::before { content: ""; position: absolute; left: 50px; top: 3px; width: 5px; height: 5px; border: solid #777; border-width: 1px 0 0 1px; rotate: 45deg; }
.errtable td { border-right: 1px solid #000; padding: 0 4px; text-align: center; white-space: nowrap; }
.errtable td:nth-child(n+4) { border-right: 0; }
.errtable td:first-child, .errtable td:nth-child(4) { text-align: left; }
.errtable .sel td { height: 19px; color: #fff; background: #0078d7; border-top: 1px dotted #e08830; border-bottom: 1px dotted #e08830; border-right-color: #fff; }
.errtable .sel td:last-child { background: none; border: 0; }
.fill td { height: auto; }
.classic { width: 17px; display: flex; flex-direction: column; }
.classic button, .classic span { background: #f0f0f0; border: 1px solid #fff; border-right: 2px solid #7c7c7c; border-bottom: 2px solid #7c7c7c; }
.classic button { height: 17px; display: grid; place-items: center; }
.classic svg { width: 8px; height: 4px; }
.classic span { flex: 1; }
.lower { display: flex; gap: 8px; margin-top: 9px; height: 148px; }
.desc { width: 352px; flex: none; }
.msgwrap { flex: 1; display: flex; border: 1px solid #828282; border-right-color: #fff; border-bottom-color: #fff; min-height: 0; margin-top: 1px; }
.msgwrap textarea { flex: 1; min-width: 0; border: 0; resize: none; background: #f0f0f0; font: 11px/14px Lato, sans-serif; padding: 0; margin: 0; overflow: hidden; color: #000; }
.vbar { width: 14px; border-left: 1px solid #fff; display: flex; flex-direction: column; justify-content: space-between; padding: 3px 0; }
.preview { flex: 1; background: #f0f4fa; border: 1px solid #dbe5f5; border-right-color: #a9a9e6; border-bottom-color: #a9a9e6; }
.actions { display: grid; grid-template-columns: 1fr 73px 1fr; margin-top: 8px; padding-top: 12px; border-top: 1px solid #a0a0a0; box-shadow: inset 0 1px #fff; }
.small { display: flex; gap: 9px; padding-left: 1px; }
.small button { width: 25px; height: 21px; border: 1px solid #adadad; background: #e1e1e1; display: grid; place-items: center; }
.closebtn { height: 21px; border: 2px solid #0078d7; background: #e1e1e1; font: 11px/14px Lato, sans-serif; }
```
